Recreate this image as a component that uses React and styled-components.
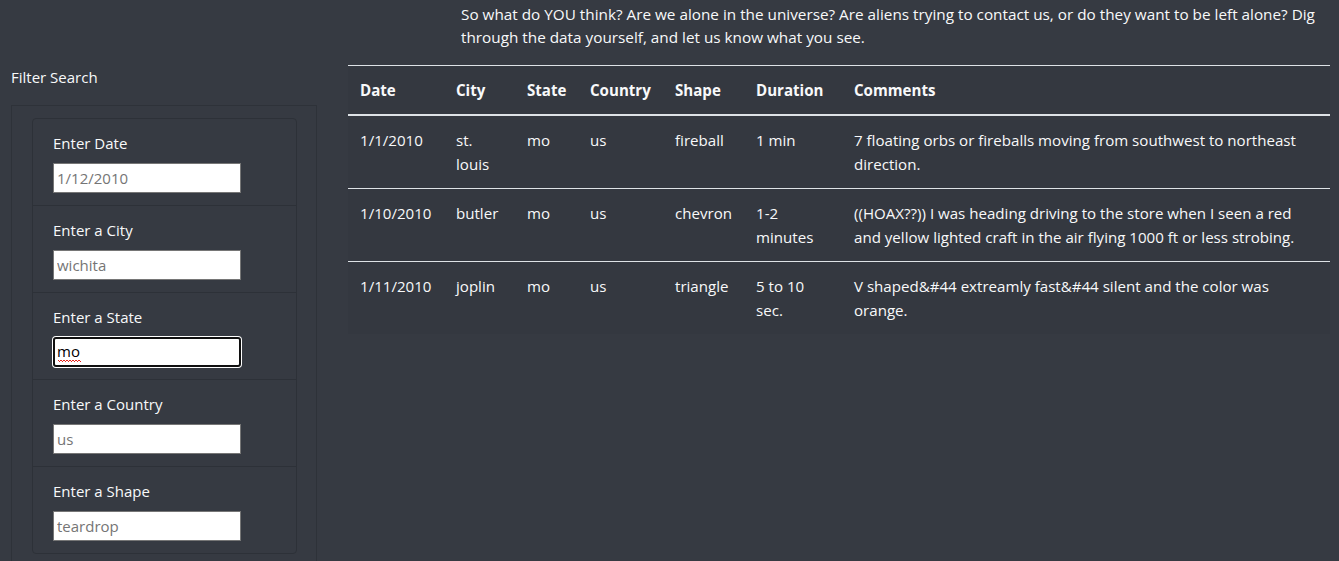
import React from 'react'
import styled, { createGlobalStyle } from 'styled-components'

const GlobalStyle = createGlobalStyle`
  html, body {
    margin: 0;
    padding: 0;
    background: #363a42;
  }
  body {
    font-family: "Open Sans", "Noto Sans", sans-serif;
    font-size: 16px;
    line-height: 1.5;
    color: #f8f9fa;
  }
`

const filters = [
  { label: 'Enter Date', placeholder: '1/12/2010' },
  { label: 'Enter a City', placeholder: 'wichita' },
  { label: 'Enter a State', value: 'mo', focused: true },
  { label: 'Enter a Country', placeholder: 'us' },
  { label: 'Enter a Shape', placeholder: 'teardrop' },
]

const sightings = [
  {
    date: '1/1/2010', city: 'st. louis', state: 'mo', country: 'us', shape: 'fireball',
    duration: '1 min',
    comments: '7 floating orbs or fireballs moving from southwest to northeast direction.',
  },
  {
    date: '1/10/2010', city: 'butler', state: 'mo', country: 'us', shape: 'chevron',
    duration: '1-2 minutes',
    comments: '((HOAX??)) I was heading driving to the store when I seen a red and yellow lighted craft in the air flying 1000 ft or less strobing.',
  },
  {
    date: '1/11/2010', city: 'joplin', state: 'mo', country: 'us', shape: 'triangle',
    duration: '5 to 10 sec.',
    comments: 'V shaped&#44 extreamly fast&#44 silent and the color was orange.',
  },
]

const columns = [
  { title: 'Date', width: 96 },
  { title: 'City', width: 71 },
  { title: 'State', width: 63 },
  { title: 'Country', width: 85 },
  { title: 'Shape', width: 81 },
  { title: 'Duration', width: 98 },
  { title: 'Comments' },
]

const App = () => {
  return (
    <>
      <GlobalStyle />
      <Page>
        <Sidebar>
          <SideTitle>Filter Search</SideTitle>
          <Panel>
            <FilterList>
              {filters.map((f) => (
                <FilterItem key={f.label}>
                  <FilterLabel>{f.label}</FilterLabel>
                  <InputWrap $spell={f.focused}>
                    <FilterInput
                      type="text"
                      placeholder={f.placeholder}
                      defaultValue={f.value}
                      spellCheck={false}
                      $focused={f.focused}
                    />
                  </InputWrap>
                </FilterItem>
              ))}
            </FilterList>
          </Panel>
        </Sidebar>

        <Main>
          <Intro>
            So what do YOU think? Are we alone in the universe? Are aliens trying to contact us, or do they want to be left alone? Dig through the data yourself, and let us know what you see.
          </Intro>
          <Table>
            <colgroup>
              {columns.map((c) => (
                <col key={c.title} style={c.width ? { width: c.width } : undefined} />
              ))}
            </colgroup>
            <thead>
              <tr>
                {columns.map((c) => (
                  <Th key={c.title}>{c.title}</Th>
                ))}
              </tr>
            </thead>
            <tbody>
              {sightings.map((s, i) => (
                <Row key={s.date} $last={i === sightings.length - 1}>
                  <Td>{s.date}</Td>
                  <Td>{s.city}</Td>
                  <Td>{s.state}</Td>
                  <Td>{s.country}</Td>
                  <Td>{s.shape}</Td>
                  <Td>{s.duration}</Td>
                  <Td>{s.comments}</Td>
                </Row>
              ))}
            </tbody>
          </Table>
        </Main>
      </Page>
    </>
  )
}

const Page = styled.div`
  display: grid;
  grid-template-columns: 340px 1fr;
  min-height: 561px;
`

const Sidebar = styled.aside`
  padding: 65px 0 0 11px;
`

const SideTitle = styled.div`
  font-size: 15px;
  line-height: 24px;
  margin-bottom: 16px;
`

const Panel = styled.div`
  width: 306px;
  box-sizing: border-box;
  padding: 12px 20px 0 20px;
  border: 1px solid #2e3239;
  border-bottom: none;
  min-height: 460px;
`

const FilterList = styled.ul`
  list-style: none;
  margin: 0;
  padding: 0;
  border: 1px solid #2d3138;
  border-radius: 4px;
  width: 265px;
  box-sizing: border-box;
`

const FilterItem = styled.li`
  display: flex;
  flex-direction: column;
  align-items: flex-start;
  padding: 12px 20px 12px 20px;
  border-top: 1px solid #2d3138;

  &:first-child {
    border-top: none;
  }
`

const FilterLabel = styled.label`
  display: block;
  font-size: 15px;
  line-height: 24px;
  margin-bottom: 8px;
`

const InputWrap = styled.div`
  position: relative;
  display: flex;

  ${(p) =>
    p.$spell &&
    `
    &::after {
      content: '';
      position: absolute;
      left: 5px;
      bottom: 4px;
      width: 23px;
      height: 3px;
      background: radial-gradient(circle at 1.5px 0, transparent 1px, #e3241c 1px, #e3241c 1.6px, transparent 1.7px) 0 0 / 3px 3px repeat-x;
    }
  `}
`

const FilterInput = styled.input`
  width: 188px;
  height: 30px;
  box-sizing: border-box;
  padding: 1px 3px;
  font-family: "Open Sans", "Noto Sans", sans-serif;
  font-size: 15px;
  color: #000;
  background: #fff;
  border: 1px solid #767676;
  border-radius: 0;
  outline: none;

  &::placeholder {
    color: #757575;
  }

  ${(p) =>
    p.$focused &&
    `
    border: 2px solid #101010;
    border-radius: 3px;
    box-shadow: 0 0 0 1px #fff;
    padding: 0 2px 2px;
  `}
`

const Main = styled.main`
  padding: 0 9px 0 8px;
`

const Intro = styled.p`
  margin: 3px 0 16px 113px;
  font-size: 15.3px;
  line-height: 23px;
`

const Table = styled.table`
  width: 100%;
  table-layout: fixed;
  border-collapse: collapse;
  background: #343840;
  border-top: 1px solid #dee2e6;
  font-size: 15.1px;
`

const Th = styled.th`
  text-align: left;
  font-weight: 700;
  padding: 12px 12px;
  line-height: 24px;
  border-bottom: 2px solid #dee2e6;
  vertical-align: bottom;
`

const Row = styled.tr`
  border-bottom: ${(p) => (p.$last ? 'none' : '1px solid #dee2e6')};
`

const Td = styled.td`
  padding: 12px 12px;
  line-height: 24px;
  vertical-align: top;
`

export default App
